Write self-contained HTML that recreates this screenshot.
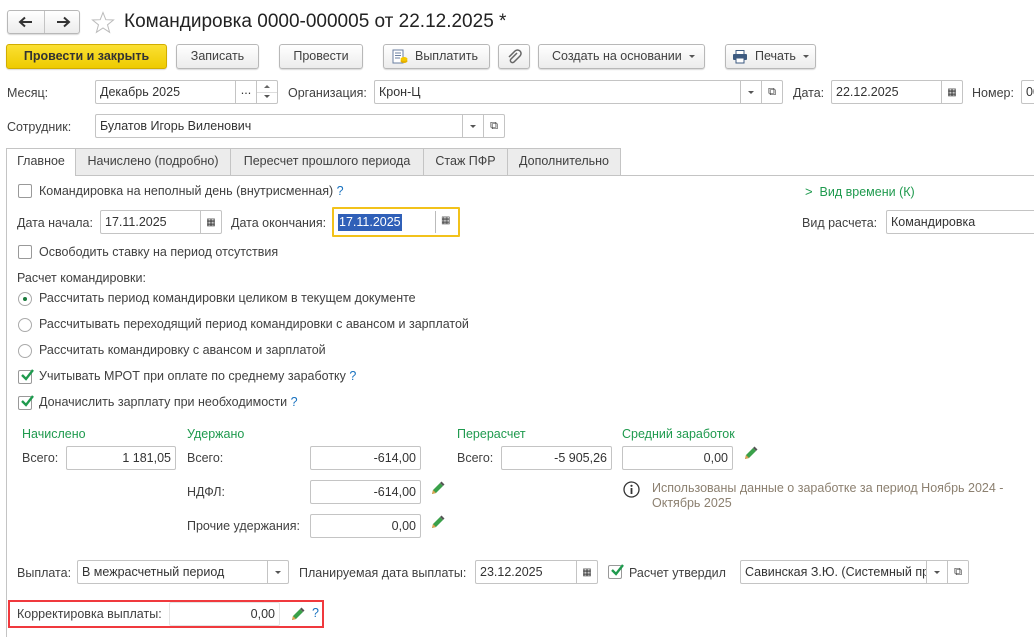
<!DOCTYPE html>
<html><head><meta charset="utf-8"><style>
*{box-sizing:border-box;margin:0;padding:0}
body{width:1034px;height:637px;overflow:hidden;background:#fff;font-family:"Liberation Sans",Arial,sans-serif;font-size:12.5px;color:#404040;position:relative}
.a{position:absolute;white-space:nowrap}
.btn{position:absolute;height:25px;border:1px solid #b8b8b8;border-radius:3px;background:linear-gradient(#fff,#ececec);box-shadow:0 1px 1px rgba(0,0,0,.15);text-align:center;line-height:23px;color:#404040;font-size:12.5px}
.inp{position:absolute;height:24px;border:1px solid #c4c4c4;border-radius:2px;background:#fff;line-height:23px;padding-left:4px;color:#333;overflow:hidden;white-space:nowrap}
.num{text-align:right;padding-right:4px}
.sb{position:absolute;top:0;height:22px;width:21px;border-left:1px solid #c4c4c4;text-align:center}
.tri{display:inline-block;width:0;height:0;border-left:3px solid transparent;border-right:3px solid transparent;border-top:3px solid #555;vertical-align:middle}
.tab{position:absolute;top:148px;height:27px;border:1px solid #c4c4c4;border-bottom:none;background:#ececec;line-height:25px;text-align:center;color:#404040}
.cb{position:absolute;width:14px;height:14px;border:1px solid #999;border-radius:2px;background:#fff}
.rd{position:absolute;width:14px;height:14px;border:1px solid #aaa;border-radius:50%;background:#fff}
.g{color:#1f9a4e}
.q{color:#1a73c0}
</style></head><body>
<!-- nav -->
<div class="btn" style="left:7px;top:10px;width:73px;height:24px"></div>
<div class="a" style="left:44px;top:11px;width:1px;height:22px;background:#c4c4c4"></div>
<svg class="a" style="left:17px;top:15px" width="18" height="14"><path d="M3 7H15M8 2.5L3 7 8 11.5" stroke="#333" stroke-width="2" fill="none"/></svg>
<svg class="a" style="left:54px;top:15px" width="18" height="14"><path d="M3 7H15M10 2.5L15 7 10 11.5" stroke="#333" stroke-width="2" fill="none"/></svg>
<svg class="a" style="left:91px;top:11px" width="24" height="23"><path d="M12 1.5L14.8 8.7 22.5 9 16.5 13.8 18.6 21.3 12 17 5.4 21.3 7.5 13.8 1.5 9 9.2 8.7Z" fill="none" stroke="#bbb" stroke-width="1"/></svg>
<div class="a" style="left:124px;top:11px;font-size:19px;color:#222">Командировка 0000-000005 от 22.12.2025 *</div>
<!-- buttons -->
<div class="btn" style="left:6px;top:44px;width:161px;background:linear-gradient(#fbe033,#eecb00);border-color:#d1ad00;font-weight:bold;color:#333">Провести и закрыть</div>
<div class="btn" style="left:176px;top:44px;width:83px">Записать</div>
<div class="btn" style="left:279px;top:44px;width:84px">Провести</div>
<div class="btn" style="left:383px;top:44px;width:107px;padding-left:20px">Выплатить</div>
<svg class="a" style="left:392px;top:49px" width="16" height="16"><rect x="1" y="1" width="10" height="13" fill="#fff" stroke="#6a7fa0"/><path d="M3 4h6M3 6.5h6M3 9h5" stroke="#6a7fa0"/><ellipse cx="12" cy="12" rx="3.5" ry="2" fill="#e5b000"/><ellipse cx="12" cy="10" rx="3.5" ry="2" fill="#f5c800"/></svg>
<div class="btn" style="left:498px;top:44px;width:32px"></div>
<svg class="a" style="left:506px;top:49px" width="16" height="16"><path d="M11 4L5 10a2 2 0 0 0 3 3l6-6a3.5 3.5 0 0 0-5-5L3 8" stroke="#666" stroke-width="1.5" fill="none"/></svg>
<div class="btn" style="left:538px;top:44px;width:167px;text-align:left;padding-left:13px">Создать на основании <span class="tri" style="margin-left:4px"></span></div>
<div class="btn" style="left:725px;top:44px;width:91px;text-align:left;padding-left:29px">Печать <span class="tri" style="margin-left:4px"></span></div>
<svg class="a" style="left:732px;top:50px" width="16" height="14"><rect x="4" y="0.5" width="8" height="4" fill="#fff" stroke="#3c5a80"/><rect x="1" y="4" width="14" height="6" rx="1" fill="#3c5a80"/><rect x="4" y="8" width="8" height="5" fill="#fff" stroke="#3c5a80"/></svg>
<!-- row 1 -->
<div class="a" style="left:7px;top:86px">Месяц:</div>
<div class="inp" style="left:95px;top:80px;width:183px">Декабрь 2025<div class="sb" style="right:21px;line-height:18px">...</div><div class="sb" style="right:0"><span style="position:absolute;left:7px;top:4px;border-left:3px solid transparent;border-right:3px solid transparent;border-bottom:3px solid #666"></span><span style="position:absolute;left:7px;top:14px" class="tri"></span><span style="position:absolute;left:0;top:11px;width:20px;border-top:1px solid #ddd"></span></div></div>
<div class="a" style="left:288px;top:86px">Организация:</div>
<div class="inp" style="left:374px;top:80px;width:409px">Крон-Ц<div class="sb" style="right:21px"><span class="tri"></span></div><div class="sb" style="right:0;font-size:11px">⧉</div></div>
<div class="a" style="left:793px;top:86px">Дата:</div>
<div class="inp" style="left:831px;top:80px;width:132px">22.12.2025<div class="sb" style="right:0;font-size:10px">▦</div></div>
<div class="a" style="left:972px;top:86px">Номер:</div>
<div class="inp" style="left:1021px;top:80px;width:30px">00</div>
<!-- row 2 -->
<div class="a" style="left:7px;top:120px">Сотрудник:</div>
<div class="inp" style="left:95px;top:114px;width:410px">Булатов Игорь Виленович<div class="sb" style="right:21px"><span class="tri"></span></div><div class="sb" style="right:0;font-size:11px">⧉</div></div>
<!-- tabs -->
<div class="a" style="left:75px;top:175px;width:959px;height:1px;background:#c4c4c4"></div>
<div class="a" style="left:6px;top:175px;width:1px;height:462px;background:#c4c4c4"></div>
<div class="tab" style="left:6px;width:70px;background:#fff;height:28px">Главное</div>
<div class="tab" style="left:75px;width:156px">Начислено (подробно)</div>
<div class="tab" style="left:230px;width:194px">Пересчет прошлого периода</div>
<div class="tab" style="left:423px;width:85px">Стаж ПФР</div>
<div class="tab" style="left:507px;width:114px">Дополнительно</div>
<!-- content -->
<div class="cb" style="left:18px;top:184px"></div>
<div class="a" style="left:39px;top:184px">Командировка на неполный день (внутрисменная) <span class="q">?</span></div>
<div class="a g" style="left:805px;top:184px"><span style="font-size:13px">&gt;</span>&nbsp; Вид времени (К)</div>
<div class="a" style="left:17px;top:216px">Дата начала:</div>
<div class="inp" style="left:100px;top:210px;width:122px">17.11.2025<div class="sb" style="right:0;font-size:10px">▦</div></div>
<div class="a" style="left:231px;top:216px">Дата окончания:</div>
<div class="a" style="left:332px;top:207px;width:128px;height:30px;border:2px solid #f2c21b;border-radius:1px;background:#fff"></div>
<div class="a" style="left:338px;top:214px;background:#3060b8;color:#fff;line-height:17px;padding:0 1px">17.11.2025</div>
<div class="a" style="left:435px;top:211px;width:1px;height:22px;background:#bbb"></div>
<div class="a" style="left:441px;top:215px;font-size:10px">▦</div>
<div class="a" style="left:802px;top:216px">Вид расчета:</div>
<div class="inp" style="left:886px;top:210px;width:160px">Командировка</div>
<div class="cb" style="left:18px;top:245px"></div>
<div class="a" style="left:39px;top:245px">Освободить ставку на период отсутствия</div>
<div class="a" style="left:17px;top:271px">Расчет командировки:</div>
<div class="rd" style="left:18px;top:292px"><span style="position:absolute;left:4px;top:4px;width:4px;height:4px;border-radius:50%;background:#1a7a3c"></span></div>
<div class="a" style="left:39px;top:291px">Рассчитать период командировки целиком в текущем документе</div>
<div class="rd" style="left:18px;top:318px"></div>
<div class="a" style="left:39px;top:317px">Рассчитывать переходящий период командировки с авансом и зарплатой</div>
<div class="rd" style="left:18px;top:344px"></div>
<div class="a" style="left:39px;top:343px">Рассчитать командировку с авансом и зарплатой</div>
<div class="cb" style="left:18px;top:370px"></div>
<svg class="a" style="left:19px;top:367px" width="16" height="16"><path d="M3 8L7 12 14 3" stroke="#1f9a4e" stroke-width="2.4" fill="none"/></svg>
<div class="a" style="left:39px;top:369px">Учитывать МРОТ при оплате по среднему заработку <span class="q">?</span></div>
<div class="cb" style="left:18px;top:396px"></div>
<svg class="a" style="left:19px;top:393px" width="16" height="16"><path d="M3 8L7 12 14 3" stroke="#1f9a4e" stroke-width="2.4" fill="none"/></svg>
<div class="a" style="left:39px;top:395px">Доначислить зарплату при необходимости <span class="q">?</span></div>
<!-- groups -->
<div class="a g" style="left:22px;top:427px">Начислено</div>
<div class="a g" style="left:187px;top:427px">Удержано</div>
<div class="a g" style="left:457px;top:427px">Перерасчет</div>
<div class="a g" style="left:622px;top:427px">Средний заработок</div>
<div class="a" style="left:22px;top:451px">Всего:</div>
<div class="inp num" style="left:66px;top:446px;width:110px">1 181,05</div>
<div class="a" style="left:187px;top:451px">Всего:</div>
<div class="inp num" style="left:310px;top:446px;width:111px">-614,00</div>
<div class="a" style="left:457px;top:451px">Всего:</div>
<div class="inp num" style="left:501px;top:446px;width:111px">-5 905,26</div>
<div class="inp num" style="left:622px;top:446px;width:111px">0,00</div>
<div class="a" style="left:187px;top:485px">НДФЛ:</div>
<div class="inp num" style="left:310px;top:480px;width:111px">-614,00</div>
<div class="a" style="left:187px;top:519px">Прочие удержания:</div>
<div class="inp num" style="left:310px;top:514px;width:111px">0,00</div>
<svg width="0" height="0" style="position:absolute"><defs><symbol id="pen" viewBox="0 0 14 14"><path d="M1 13L2 9 9 2 12 5 5 12Z" fill="#3aa14a"/><path d="M1 13L2 9 5 12Z" fill="#e0a050"/><path d="M9 2L10.5 0.5 13.5 3.5 12 5Z" fill="#555"/></symbol></defs></svg>
<svg class="a" style="left:744px;top:446px" width="14" height="14"><use href="#pen"/></svg>
<svg class="a" style="left:431px;top:481px" width="14" height="14"><use href="#pen"/></svg>
<svg class="a" style="left:431px;top:515px" width="14" height="14"><use href="#pen"/></svg>
<svg class="a" style="left:623px;top:481px" width="17" height="17"><circle cx="8.5" cy="8.5" r="7.5" fill="none" stroke="#333" stroke-width="1.3"/><circle cx="8.5" cy="4.8" r="1.1" fill="#333"/><path d="M8.5 7v6" stroke="#333" stroke-width="1.8"/></svg>
<div class="a" style="left:652px;top:481px;color:#8c8070;line-height:15px">Использованы данные о заработке за период Ноябрь 2024 -<br>Октябрь 2025</div>
<!-- выплата -->
<div class="a" style="left:17px;top:566px">Выплата:</div>
<div class="inp" style="left:77px;top:560px;width:212px">В межрасчетный период<div class="sb" style="right:0"><span class="tri"></span></div></div>
<div class="a" style="left:299px;top:566px">Планируемая дата выплаты:</div>
<div class="inp" style="left:475px;top:560px;width:123px">23.12.2025<div class="sb" style="right:0;font-size:10px">▦</div></div>
<div class="cb" style="left:608px;top:565px"></div>
<svg class="a" style="left:609px;top:562px" width="16" height="16"><path d="M3 8L7 12 14 3" stroke="#1f9a4e" stroke-width="2.4" fill="none"/></svg>
<div class="a" style="left:629px;top:566px">Расчет утвердил</div>
<div class="inp" style="left:740px;top:560px;width:229px">Савинская З.Ю. (Системный прог<div class="sb" style="right:21px;background:#fff"><span class="tri"></span></div><div class="sb" style="right:0;font-size:11px;background:#fff">⧉</div></div>
<!-- корректировка -->
<div class="a" style="left:8px;top:600px;width:316px;height:28px;border:2px solid #f0393d"></div>
<div class="a" style="left:17px;top:607px">Корректировка выплаты:</div>
<div class="inp num" style="left:169px;top:602px;width:111px;border-color:#e4e4e4">0,00</div>
<svg class="a" style="left:291px;top:607px" width="14" height="14"><use href="#pen"/></svg>
<div class="a q" style="left:312px;top:606px">?</div>
</body></html>
